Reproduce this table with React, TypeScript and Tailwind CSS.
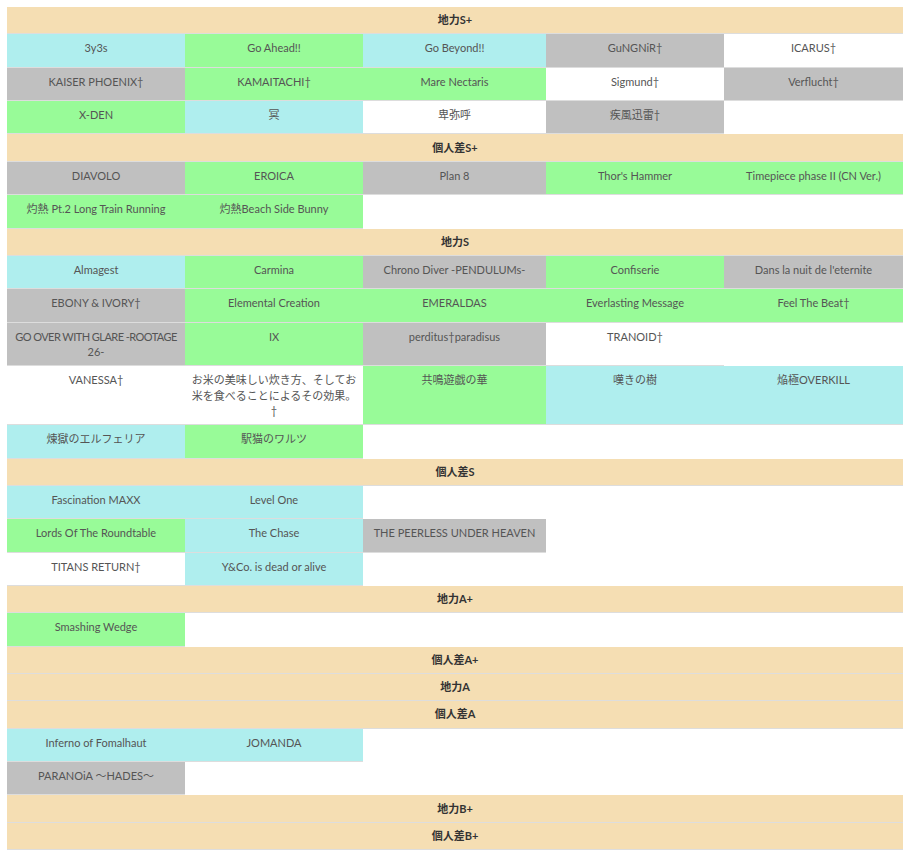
import React from "react";

type Cell = [string, "c" | "g" | "s" | "w"];
type Section = { title: string; rows: Cell[][] };

const BG: Record<string, string> = {
  c: "bg-[#afeeee]",
  g: "bg-[#98fb98]",
  s: "bg-[#c0c0c0]",
  w: "bg-white",
};

const sections: Section[] = [
  {
    title: "地力S+",
    rows: [
      [["3y3s", "c"], ["Go Ahead!!", "g"], ["Go Beyond!!", "c"], ["GuNGNiR†", "s"], ["ICARUS†", "w"]],
      [["KAISER PHOENIX†", "s"], ["KAMAITACHI†", "g"], ["Mare Nectaris", "g"], ["Sigmund†", "w"], ["Verflucht†", "s"]],
      [["X-DEN", "g"], ["冥", "c"], ["卑弥呼", "w"], ["疾風迅雷†", "s"]],
    ],
  },
  {
    title: "個人差S+",
    rows: [
      [["DIAVOLO", "s"], ["EROICA", "g"], ["Plan 8", "s"], ["Thor's Hammer", "g"], ["Timepiece phase II (CN Ver.)", "g"]],
      [["灼熱 Pt.2 Long Train Running", "g"], ["灼熱Beach Side Bunny", "g"]],
    ],
  },
  {
    title: "地力S",
    rows: [
      [["Almagest", "c"], ["Carmina", "g"], ["Chrono Diver -PENDULUMs-", "s"], ["Confiserie", "g"], ["Dans la nuit de l'eternite", "s"]],
      [["EBONY & IVORY†", "s"], ["Elemental Creation", "g"], ["EMERALDAS", "g"], ["Everlasting Message", "g"], ["Feel The Beat†", "g"]],
      [["GO OVER WITH GLARE -ROOTAGE 26-", "s"], ["IX", "g"], ["perditus†paradisus", "s"], ["TRANOID†", "w"]],
      [["VANESSA†", "w"], ["お米の美味しい炊き方、そしてお米を食べることによるその効果。†", "w"], ["共鳴遊戯の華", "g"], ["嘆きの樹", "c"], ["焔極OVERKILL", "c"]],
      [["煉獄のエルフェリア", "c"], ["駅猫のワルツ", "g"]],
    ],
  },
  {
    title: "個人差S",
    rows: [
      [["Fascination MAXX", "c"], ["Level One", "c"]],
      [["Lords Of The Roundtable", "g"], ["The Chase", "c"], ["THE PEERLESS UNDER HEAVEN", "s"]],
      [["TITANS RETURN†", "w"], ["Y&Co. is dead or alive", "c"]],
    ],
  },
  { title: "地力A+", rows: [[["Smashing Wedge", "g"]]] },
  { title: "個人差A+", rows: [] },
  { title: "地力A", rows: [] },
  {
    title: "個人差A",
    rows: [
      [["Inferno of Fomalhaut", "c"], ["JOMANDA", "c"]],
      [["PARANOiA ～HADES～", "s"]],
    ],
  },
  { title: "地力B+", rows: [] },
  { title: "個人差B+", rows: [] },
];

function CellText({ t }: { t: string }) {
  if (t === "GO OVER WITH GLARE -ROOTAGE 26-") {
    return (
      <>
        <span className="whitespace-nowrap tracking-[-0.55px]">GO OVER WITH GLARE -ROOTAGE</span>
        <br />
        26-
      </>
    );
  }
  return <>{t}</>;
}

export default function App() {
  return (
    <div className="min-h-screen bg-white pt-[7px] pl-[7px] font-['Lato','Noto_Sans_CJK_JP',sans-serif] text-[11px]">
      <div className="w-[896px]">
        {sections.map((s) => (
          <div key={s.title}>
            <div className="flex h-[27.3px] items-center justify-center border-b border-[#dddddd] bg-[#f5deb3] font-bold leading-[16px] text-[#333333]">
              {s.title}
            </div>
            {s.rows.map((r, i) => (
              <div key={i} className="grid grid-cols-[178px_178px_183px_178px_179px]">
                {r.map(([t, b]) => (
                  <div
                    key={t}
                    className={`${BG[b]} min-h-[33.4px] border-b border-[#dddddd] px-[5px] pt-[6px] pb-[5px] text-center leading-[15.71px] text-[#555555]`}
                  >
                    <CellText t={t} />
                  </div>
                ))}
              </div>
            ))}
          </div>
        ))}
      </div>
    </div>
  );
}
